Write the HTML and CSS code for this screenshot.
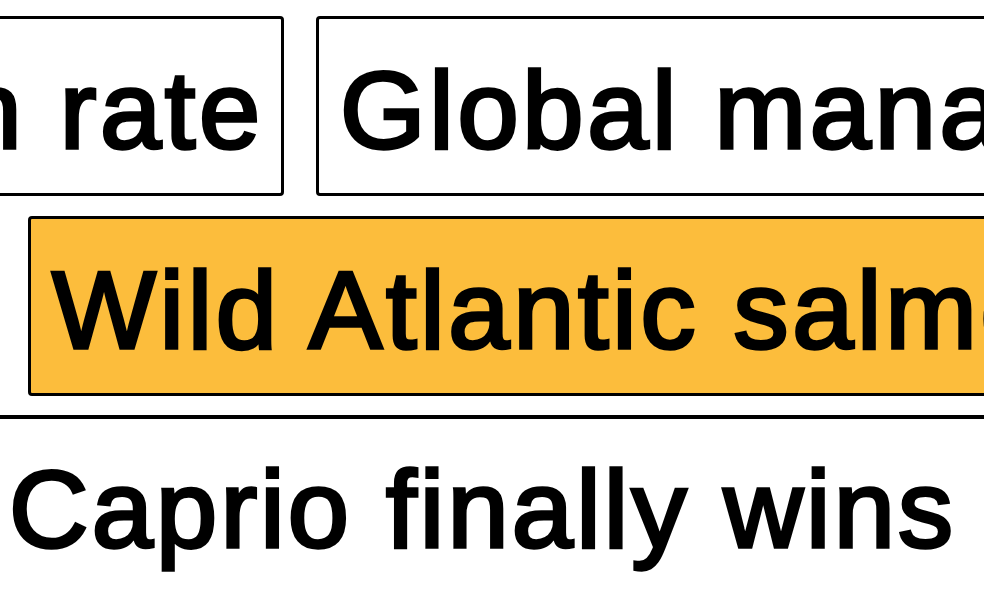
FILE: index.html
```html
<!DOCTYPE html>
<html>
<head>
    <title>Headlines</title>
    <link rel="stylesheet" href="styles.css">
</head>
<body>
<div class="board">
    <div class="row row-top">
        <div class="lead">
            <div class="tile">Inflation rate</div>
        </div>
        <div class="tile">Global manatee numbers</div>
    </div>
    <div class="row row-mid">
        <div class="tile tile-hot">Wild Atlantic salmon</div>
    </div>
    <hr class="divider">
    <h1 class="headline">Caprio finally wins</h1>
</div>
</body>
</html>
```

FILE: styles.css
```css
html, body {
    margin: 0;
    background-color: #fff;
    overflow: hidden;
}
body {
    font-family: "Liberation Sans", Helvetica, Arial, sans-serif;
    font-size: 110px;
    line-height: 130px;
    letter-spacing: 3.2px;
    color: #000;
    /* thicken the regular cut a little */
    -webkit-text-stroke: 3.5px #000;
}
.board {
    padding-top: 16px;
    display: flex;
    flex-direction: column;
}
.row {
    display: flex;
    gap: 32px;
}
.lead {
    width: 284px;
    flex-shrink: 0;
    display: flex;
    justify-content: flex-end;
}
.row-mid {
    margin-top: 20px;
    padding-left: 28px;
}
.tile {
    flex-shrink: 0;
    white-space: nowrap;
    border: 3px solid #000;
    border-radius: 4px;
    padding: 26px 17px 18px 21px;
    letter-spacing: 3.7px;
    background-color: #fff;
}
.tile-hot {
    background-color: #fcbd3c;
}
.divider {
    margin: 19px 0 0;
    border: none;
    border-top: 4px solid #000;
    height: 0;
}
.headline {
    margin: 25px 0 0 9px;
    font-size: inherit;
    font-weight: normal;
    white-space: nowrap;
}
```
